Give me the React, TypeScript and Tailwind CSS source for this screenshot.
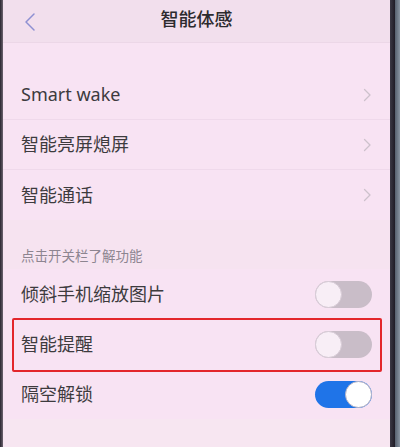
import React from "react";

const font = { fontFamily: '"Noto Sans", "Noto Sans CJK SC", sans-serif' };

function Chevron() {
  return (
    <svg width="9" height="14" viewBox="0 0 9 14" fill="none">
      <path d="M1.5 1.5 L7 7 L1.5 12.5" stroke="#cdc1cc" strokeWidth="1.3" strokeLinecap="round" strokeLinejoin="round" />
    </svg>
  );
}

function Toggle({ on }: { on: boolean }) {
  return on ? (
    <div className="w-[57px] h-[27px] rounded-full bg-[#1f74e8] flex items-center justify-end">
      <div className="w-[27px] h-[27px] rounded-full bg-white border border-[#b9b4c4]" />
    </div>
  ) : (
    <div className="w-[57px] h-[27px] rounded-full bg-[#c9bdc8] flex items-center">
      <div className="w-[27px] h-[27px] rounded-full bg-[#f8eef6] border border-[#d7cbd6]" />
    </div>
  );
}

const LinkRow = ({ label, last }: { label: string; last?: boolean }) => (
  <div className={"h-[50px] flex items-center justify-between pl-[18px] pr-[18px] " + (last ? "" : "border-b border-[#efd9eb]")}>
    <span className="text-[18px] text-[#3d3b3e]">{label}</span>
    <Chevron />
  </div>
);

const ToggleRow = ({ label, on, marked }: { label: string; on: boolean; marked?: boolean }) => (
  <div className="relative h-[50px] flex items-center justify-between pl-[18px] pr-[18px]">
    <span className="text-[18px] text-[#3d3b3e]">{label}</span>
    <Toggle on={on} />
    {marked && (
      <div className="absolute top-[-1px] bottom-[-3px] left-[9px] right-[8px] border-2 border-[#e3262b] rounded-[2px]" />
    )}
  </div>
);

export default function App() {
  return (
    <div className="w-[400px] h-[447px] flex overflow-hidden" style={font}>
      <div className="w-[3px] bg-gradient-to-r from-[#2a2630] to-[#6d6470]" />
      <div className="flex-1 flex flex-col bg-[#f8e3f3]">
        <div className="h-[43px] flex items-center relative bg-[#f2dfed] border-b border-[#ecd7e7]">
          <div className="pl-[20px] pt-[2px]">
            <svg width="14" height="20" viewBox="0 0 14 20" fill="none">
              <path d="M11 2 L3 10 L11 18" stroke="#8e90d2" strokeWidth="1.5" strokeLinecap="round" strokeLinejoin="round" />
            </svg>
          </div>
          <div className="absolute inset-0 flex items-center justify-center pb-[3px]">
            <span className="text-[18px] font-medium text-[#2c2a2e]">智能体感</span>
          </div>
        </div>
        <div className="h-[27px]" />
        <LinkRow label="Smart wake" />
        <LinkRow label="智能亮屏熄屏" />
        <LinkRow label="智能通话" last />
        <div className="h-[49px] flex items-end pl-[18px] pb-[3px] bg-[#f6e3f0]">
          <span className="text-[13.5px] text-[#8d8590]">点击开关栏了解功能</span>
        </div>
        <ToggleRow label="倾斜手机缩放图片" on={false} />
        <ToggleRow label="智能提醒" on={false} marked />
        <ToggleRow label="隔空解锁" on />
        <div className="flex-1 bg-[#f7e6f1]" />
      </div>
      <div className="w-[10px] flex">
        <div className="w-[5px] bg-gradient-to-r from-[#3b3844] to-[#1f1c26]" />
        <div className="flex-1 bg-gradient-to-r from-[#56606e] to-[#8995a2]" />
      </div>
    </div>
  );
}
